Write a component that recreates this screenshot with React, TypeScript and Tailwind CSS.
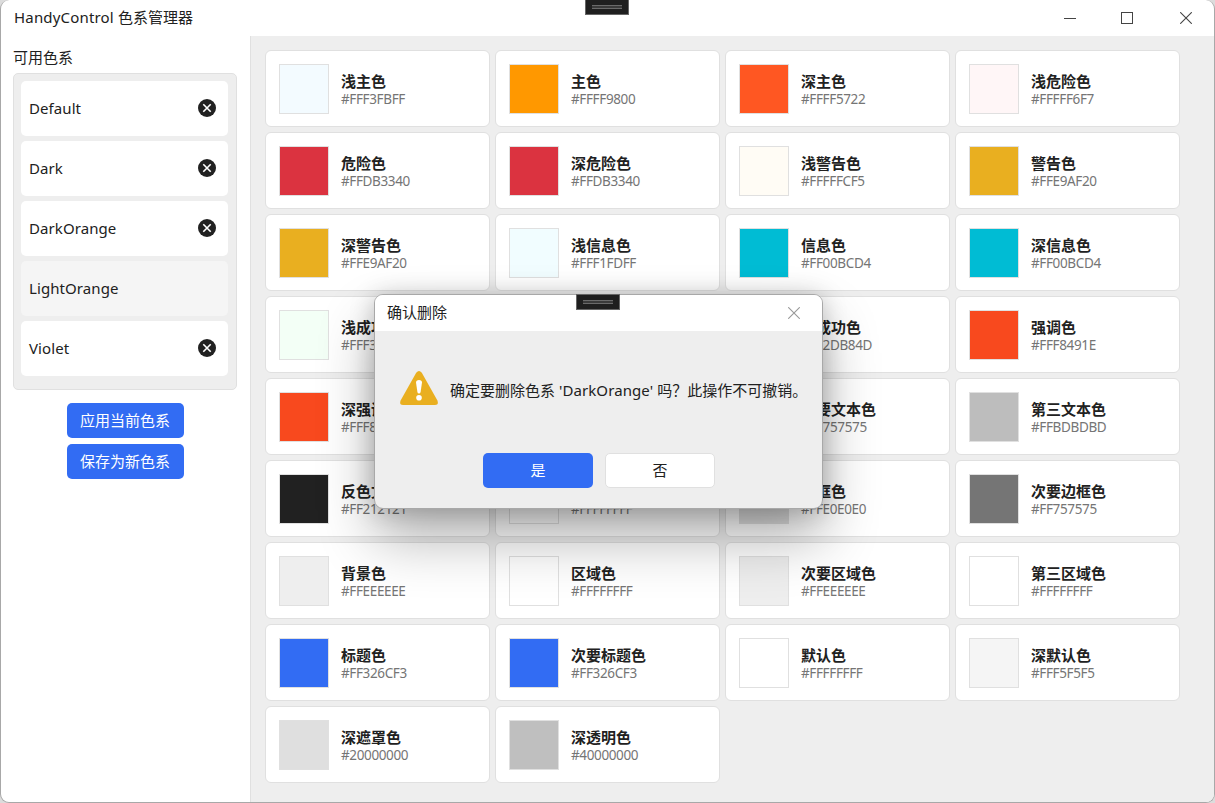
import React from 'react';
import clsx from 'clsx';

interface ColorItem {
  name: string;
  hex: string;
  fill: string;
}

interface Scheme {
  name: string;
  selected?: boolean;
}

const schemes: Scheme[] = [
  { name: 'Default' },
  { name: 'Dark' },
  { name: 'DarkOrange' },
  { name: 'LightOrange', selected: true },
  { name: 'Violet' },
];

const colors: ColorItem[] = [
  { name: '浅主色', hex: '#FFF3FBFF', fill: 'bg-[#f3fbff]' },
  { name: '主色', hex: '#FFFF9800', fill: 'bg-[#ff9800]' },
  { name: '深主色', hex: '#FFFF5722', fill: 'bg-[#ff5722]' },
  { name: '浅危险色', hex: '#FFFFF6F7', fill: 'bg-[#fff6f7]' },
  { name: '危险色', hex: '#FFDB3340', fill: 'bg-[#db3340]' },
  { name: '深危险色', hex: '#FFDB3340', fill: 'bg-[#db3340]' },
  { name: '浅警告色', hex: '#FFFFFCF5', fill: 'bg-[#fffcf5]' },
  { name: '警告色', hex: '#FFE9AF20', fill: 'bg-[#e9af20]' },
  { name: '深警告色', hex: '#FFE9AF20', fill: 'bg-[#e9af20]' },
  { name: '浅信息色', hex: '#FFF1FDFF', fill: 'bg-[#f1fdff]' },
  { name: '信息色', hex: '#FF00BCD4', fill: 'bg-[#00bcd4]' },
  { name: '深信息色', hex: '#FF00BCD4', fill: 'bg-[#00bcd4]' },
  { name: '浅成功色', hex: '#FFF3FFF6', fill: 'bg-[#f3fff6]' },
  { name: '成功色', hex: '#FF2DB84D', fill: 'bg-[#2db84d]' },
  { name: '深成功色', hex: '#FF2DB84D', fill: 'bg-[#2db84d]' },
  { name: '强调色', hex: '#FFF8491E', fill: 'bg-[#f8491e]' },
  { name: '深强调色', hex: '#FFF8491E', fill: 'bg-[#f8491e]' },
  { name: '主文本色', hex: '#FF212121', fill: 'bg-[#212121]' },
  { name: '次要文本色', hex: '#FF757575', fill: 'bg-[#757575]' },
  { name: '第三文本色', hex: '#FFBDBDBD', fill: 'bg-[#bdbdbd]' },
  { name: '反色文本色', hex: '#FF212121', fill: 'bg-[#212121]' },
  { name: '图标文本色', hex: '#FFFFFFFF', fill: 'bg-white' },
  { name: '边框色', hex: '#FFE0E0E0', fill: 'bg-[#e0e0e0]' },
  { name: '次要边框色', hex: '#FF757575', fill: 'bg-[#757575]' },
  { name: '背景色', hex: '#FFEEEEEE', fill: 'bg-[#eeeeee]' },
  { name: '区域色', hex: '#FFFFFFFF', fill: 'bg-white' },
  { name: '次要区域色', hex: '#FFEEEEEE', fill: 'bg-[#eeeeee]' },
  { name: '第三区域色', hex: '#FFFFFFFF', fill: 'bg-white' },
  { name: '标题色', hex: '#FF326CF3', fill: 'bg-[#326cf3]' },
  { name: '次要标题色', hex: '#FF326CF3', fill: 'bg-[#326cf3]' },
  { name: '默认色', hex: '#FFFFFFFF', fill: 'bg-white' },
  { name: '深默认色', hex: '#FFF5F5F5', fill: 'bg-[#f5f5f5]' },
  { name: '深遮罩色', hex: '#20000000', fill: 'bg-[#dfdfdf]' },
  { name: '深透明色', hex: '#40000000', fill: 'bg-[#bfbfbf]' },
];

const DebugHandle: React.FC<{ className?: string }> = ({ className }) => (
  <div className={clsx('absolute w-11 border border-[#666] bg-[#1f1f1f]', className)}>
    <div className="mx-1.5 mt-[5px] h-1 border-y border-[#6a6a6a] bg-[#3a3a3a]" />
  </div>
);

const CloseGlyph: React.FC<{ className?: string }> = ({ className }) => (
  <svg viewBox="0 0 12 12" className={clsx('h-3 w-3', className)} fill="none" stroke="currentColor">
    <path d="M0.2 0.2 L11.8 11.8 M11.8 0.2 L0.2 11.8" strokeWidth="1.1" />
  </svg>
);

const TitleBar: React.FC = () => (
  <header className="flex h-9 shrink-0 items-center justify-between pl-[13px] pr-[22px]">
    <h1 className="pb-0.5 leading-5">
      <span className="tracking-[0.18px]">HandyControl </span>色系管理器
    </h1>
    <div className="flex items-center text-[#444]">
      <div className="h-px w-3 bg-[#444]" />
      <div className="ml-[45px] h-3 w-3 border border-[#444]" />
      <CloseGlyph className="ml-[47px]" />
    </div>
  </header>
);

const SchemeRow: React.FC<{ scheme: Scheme }> = ({ scheme }) => (
  <li
    className={clsx(
      'flex h-[55px] items-center justify-between rounded-[5px] pb-px pl-2 pr-3',
      scheme.selected ? 'bg-[#f5f5f5]' : 'bg-white',
    )}
  >
    <span className="tracking-[0.08px]">{scheme.name}</span>
    {!scheme.selected && (
      <svg viewBox="0 0 18 18" className="h-[18px] w-[18px]">
        <circle cx="9" cy="9" r="9" fill="#212121" />
        <path d="M5.3 5.3 L12.7 12.7 M12.7 5.3 L5.3 12.7" stroke="#fff" strokeWidth="1.6" />
      </svg>
    )}
  </li>
);

const Sidebar: React.FC = () => (
  <aside className="flex w-[249px] shrink-0 flex-col pl-3 pr-[13px] pt-[11px]">
    <h2 className="h-[26px] leading-5">可用色系</h2>
    <ul className="flex h-[317px] flex-col gap-[5px] rounded-[5px] border border-[#e0e0e0] bg-[#eeeeee] py-[7px] pl-[7px] pr-2">
      {schemes.map((s) => (
        <SchemeRow key={s.name} scheme={s} />
      ))}
    </ul>
    <div className="mt-[13px] flex flex-col items-center gap-1.5">
      <button className="h-[35px] w-[117px] rounded-[5px] bg-[#326cf3] text-white">应用当前色系</button>
      <button className="h-[35px] w-[117px] rounded-[5px] bg-[#326cf3] text-white">保存为新色系</button>
    </div>
  </aside>
);

const ColorCard: React.FC<{ item: ColorItem }> = ({ item }) => (
  <div className="flex h-[77px] w-[225px] items-center rounded-[6px] border border-[#e0e0e0] bg-white pl-[13px]">
    <div className={clsx('h-[50px] w-[50px] border border-[#e0e0e0]', item.fill)} />
    <div className="ml-3">
      <div className="font-bold leading-5">{item.name}</div>
      <div className="text-[13.5px] leading-4 tracking-[-0.37px] text-[#757575]">{item.hex}</div>
    </div>
  </div>
);

const ConfirmDialog: React.FC = () => (
  <div
    role="dialog"
    className="absolute left-[373px] top-[294px] flex h-[215px] w-[449px] flex-col rounded-[9px] border border-[#a8a8a8] bg-[#eeeeee]
      shadow-[0_30px_56px_rgba(0,0,0,0.3),0_2px_24px_rgba(0,0,0,0.22)]"
  >
    <div className="flex h-9 shrink-0 items-center justify-between rounded-t-lg bg-white pl-3 pr-[22px]">
      <span className="pb-0.5">确认删除</span>
      <CloseGlyph className="text-[#999]" />
    </div>
    <DebugHandle className="left-[201px] top-[-1px] h-4" />
    <div className="flex h-[122px] items-start pl-[25px] pt-10">
      <svg viewBox="0 0 38 34" className="h-[34px] w-[38px] shrink-0">
        <path
          d="M16.2 1.7 Q19 -1.7 21.8 1.7 L37.4 29.6 Q39 34 35 34 H3 Q-1 34 0.6 29.6 Z"
          fill="#e9af20"
        />
        <path d="M16 11.5 Q16 9 19 9 Q22 9 22 11.5 L20.6 21 Q20.3 22.6 19 22.6 Q17.7 22.6 17.4 21 Z" fill="#fff" />
        <circle cx="19" cy="26.8" r="2.8" fill="#fff" />
      </svg>
      <p className="ml-3 mt-[9px] whitespace-nowrap leading-5">
        确定要删除色系 <span className="tracking-[0.1px]">'DarkOrange'</span> 吗？此操作不可撤销。
      </p>
    </div>
    <div className="flex gap-3 pl-[108px]">
      <button className="h-[35px] w-[110px] rounded-[5px] bg-[#326cf3] text-white">是</button>
      <button className="h-[35px] w-[110px] rounded-[5px] border border-[#e0e0e0] bg-white">否</button>
    </div>
  </div>
);

const App: React.FC = () => (
  <div className="h-[803px] w-[1215px] overflow-hidden bg-[#dcdcdc]">
    <div className="relative flex h-full flex-col overflow-hidden rounded-[9px] border border-t-0 border-[#a8a8a8] bg-white font-['Noto_Sans','Noto_Sans_CJK_SC',sans-serif] text-[15px] text-[#212121]">
      <TitleBar />
      <DebugHandle className="left-[584px] top-[-1px] h-4" />
      <div className="flex min-h-0 flex-1">
        <Sidebar />
        <main className="flex flex-1 flex-wrap content-start gap-[5px] border-l border-[#e0e0e0] bg-[#eeeeee] pl-3.5 pr-[30px] pt-3.5">
          {colors.map((c) => (
            <ColorCard key={c.name} item={c} />
          ))}
        </main>
      </div>
      <ConfirmDialog />
    </div>
  </div>
);

export default App;
